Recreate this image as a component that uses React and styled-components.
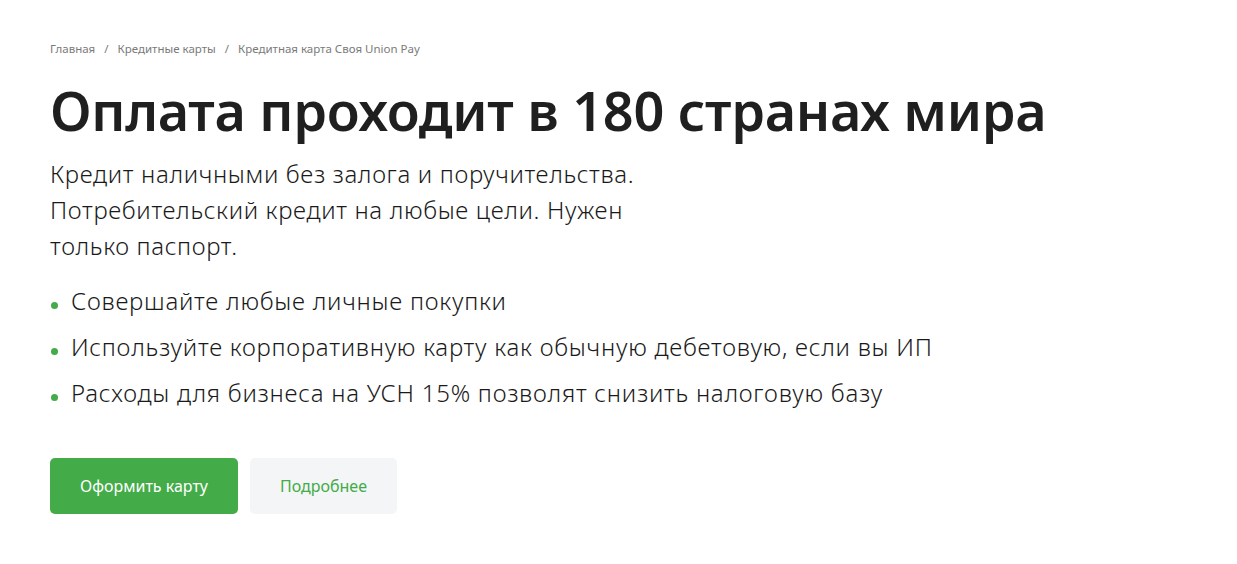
import styled, { createGlobalStyle } from "styled-components";

const GlobalStyle = createGlobalStyle`
  body {
    margin: 0;
    background: #fff;
    font-family: "Noto Sans", "Open Sans", sans-serif;
    color: #1f1f1f;
  }
`;

const Page = styled.main`
  padding: 40px 50px 50px;
`;

const Crumbs = styled.nav`
  display: flex;
  align-items: center;
  gap: 9px;
  font-size: 11.5px;
  line-height: 16px;
  color: #7a7a7a;
  margin-top: 1px;
`;

const Crumb = styled.span``;

const Slash = styled.span`
  color: #7a7a7a;
`;

const Title = styled.h1`
  margin: 17px 0 0;
  font-size: 54px;
  line-height: 72px;
  font-weight: 600;
  letter-spacing: -0.3px;
  color: #1f1f1f;
`;

const Lead = styled.p`
  margin: 10px 0 0;
  max-width: 620px;
  font-size: 24px;
  line-height: 36px;
  font-weight: 300;
  letter-spacing: 0.65px;
  color: #1a1a1a;
`;

const List = styled.ul`
  list-style: none;
  margin: 19px 0 0;
  padding: 0;
  display: flex;
  flex-direction: column;
  gap: 10px;
`;

const Item = styled.li`
  display: flex;
  align-items: center;
  gap: 13px;
  font-size: 24px;
  line-height: 36px;
  font-weight: 300;
  letter-spacing: 0.75px;
  color: #1a1a1a;

  &::before {
    content: "";
    width: 7px;
    height: 7px;
    margin-left: 1px;
    margin-top: 8px;
    border-radius: 50%;
    background: #43ab48;
    flex-shrink: 0;
  }
`;

const Actions = styled.div`
  display: flex;
  gap: 12px;
  margin-top: 47px;
`;

const Button = styled.button`
  height: 56px;
  padding: 0 30px;
  border: none;
  border-radius: 5px;
  font-family: inherit;
  font-size: 16px;
  cursor: pointer;
  color: ${(props) => (props.$primary ? "#fff" : "#43ab48")};
  background: ${(props) => (props.$primary ? "#43ab48" : "#f4f5f7")};
`;

const items = [
  "Совершайте любые личные покупки",
  "Используйте корпоративную карту как обычную дебетовую, если вы ИП",
  "Расходы для бизнеса на УСН 15% позволят снизить налоговую базу",
];

export default function App() {
  return (
    <>
      <GlobalStyle />
      <Page>
        <Crumbs>
          <Crumb>Главная</Crumb>
          <Slash>/</Slash>
          <Crumb>Кредитные карты</Crumb>
          <Slash>/</Slash>
          <Crumb>Кредитная карта Своя Union Pay</Crumb>
        </Crumbs>
        <Title>Оплата проходит в 180 странах мира</Title>
        <Lead>
          Кредит наличными без залога и поручительства.
          <br />
          Потребительский кредит на любые цели. Нужен
          <br />
          только паспорт.
        </Lead>
        <List>
          {items.map((text) => (
            <Item key={text}>{text}</Item>
          ))}
        </List>
        <Actions>
          <Button $primary>Оформить карту</Button>
          <Button>Подробнее</Button>
        </Actions>
      </Page>
    </>
  );
}
